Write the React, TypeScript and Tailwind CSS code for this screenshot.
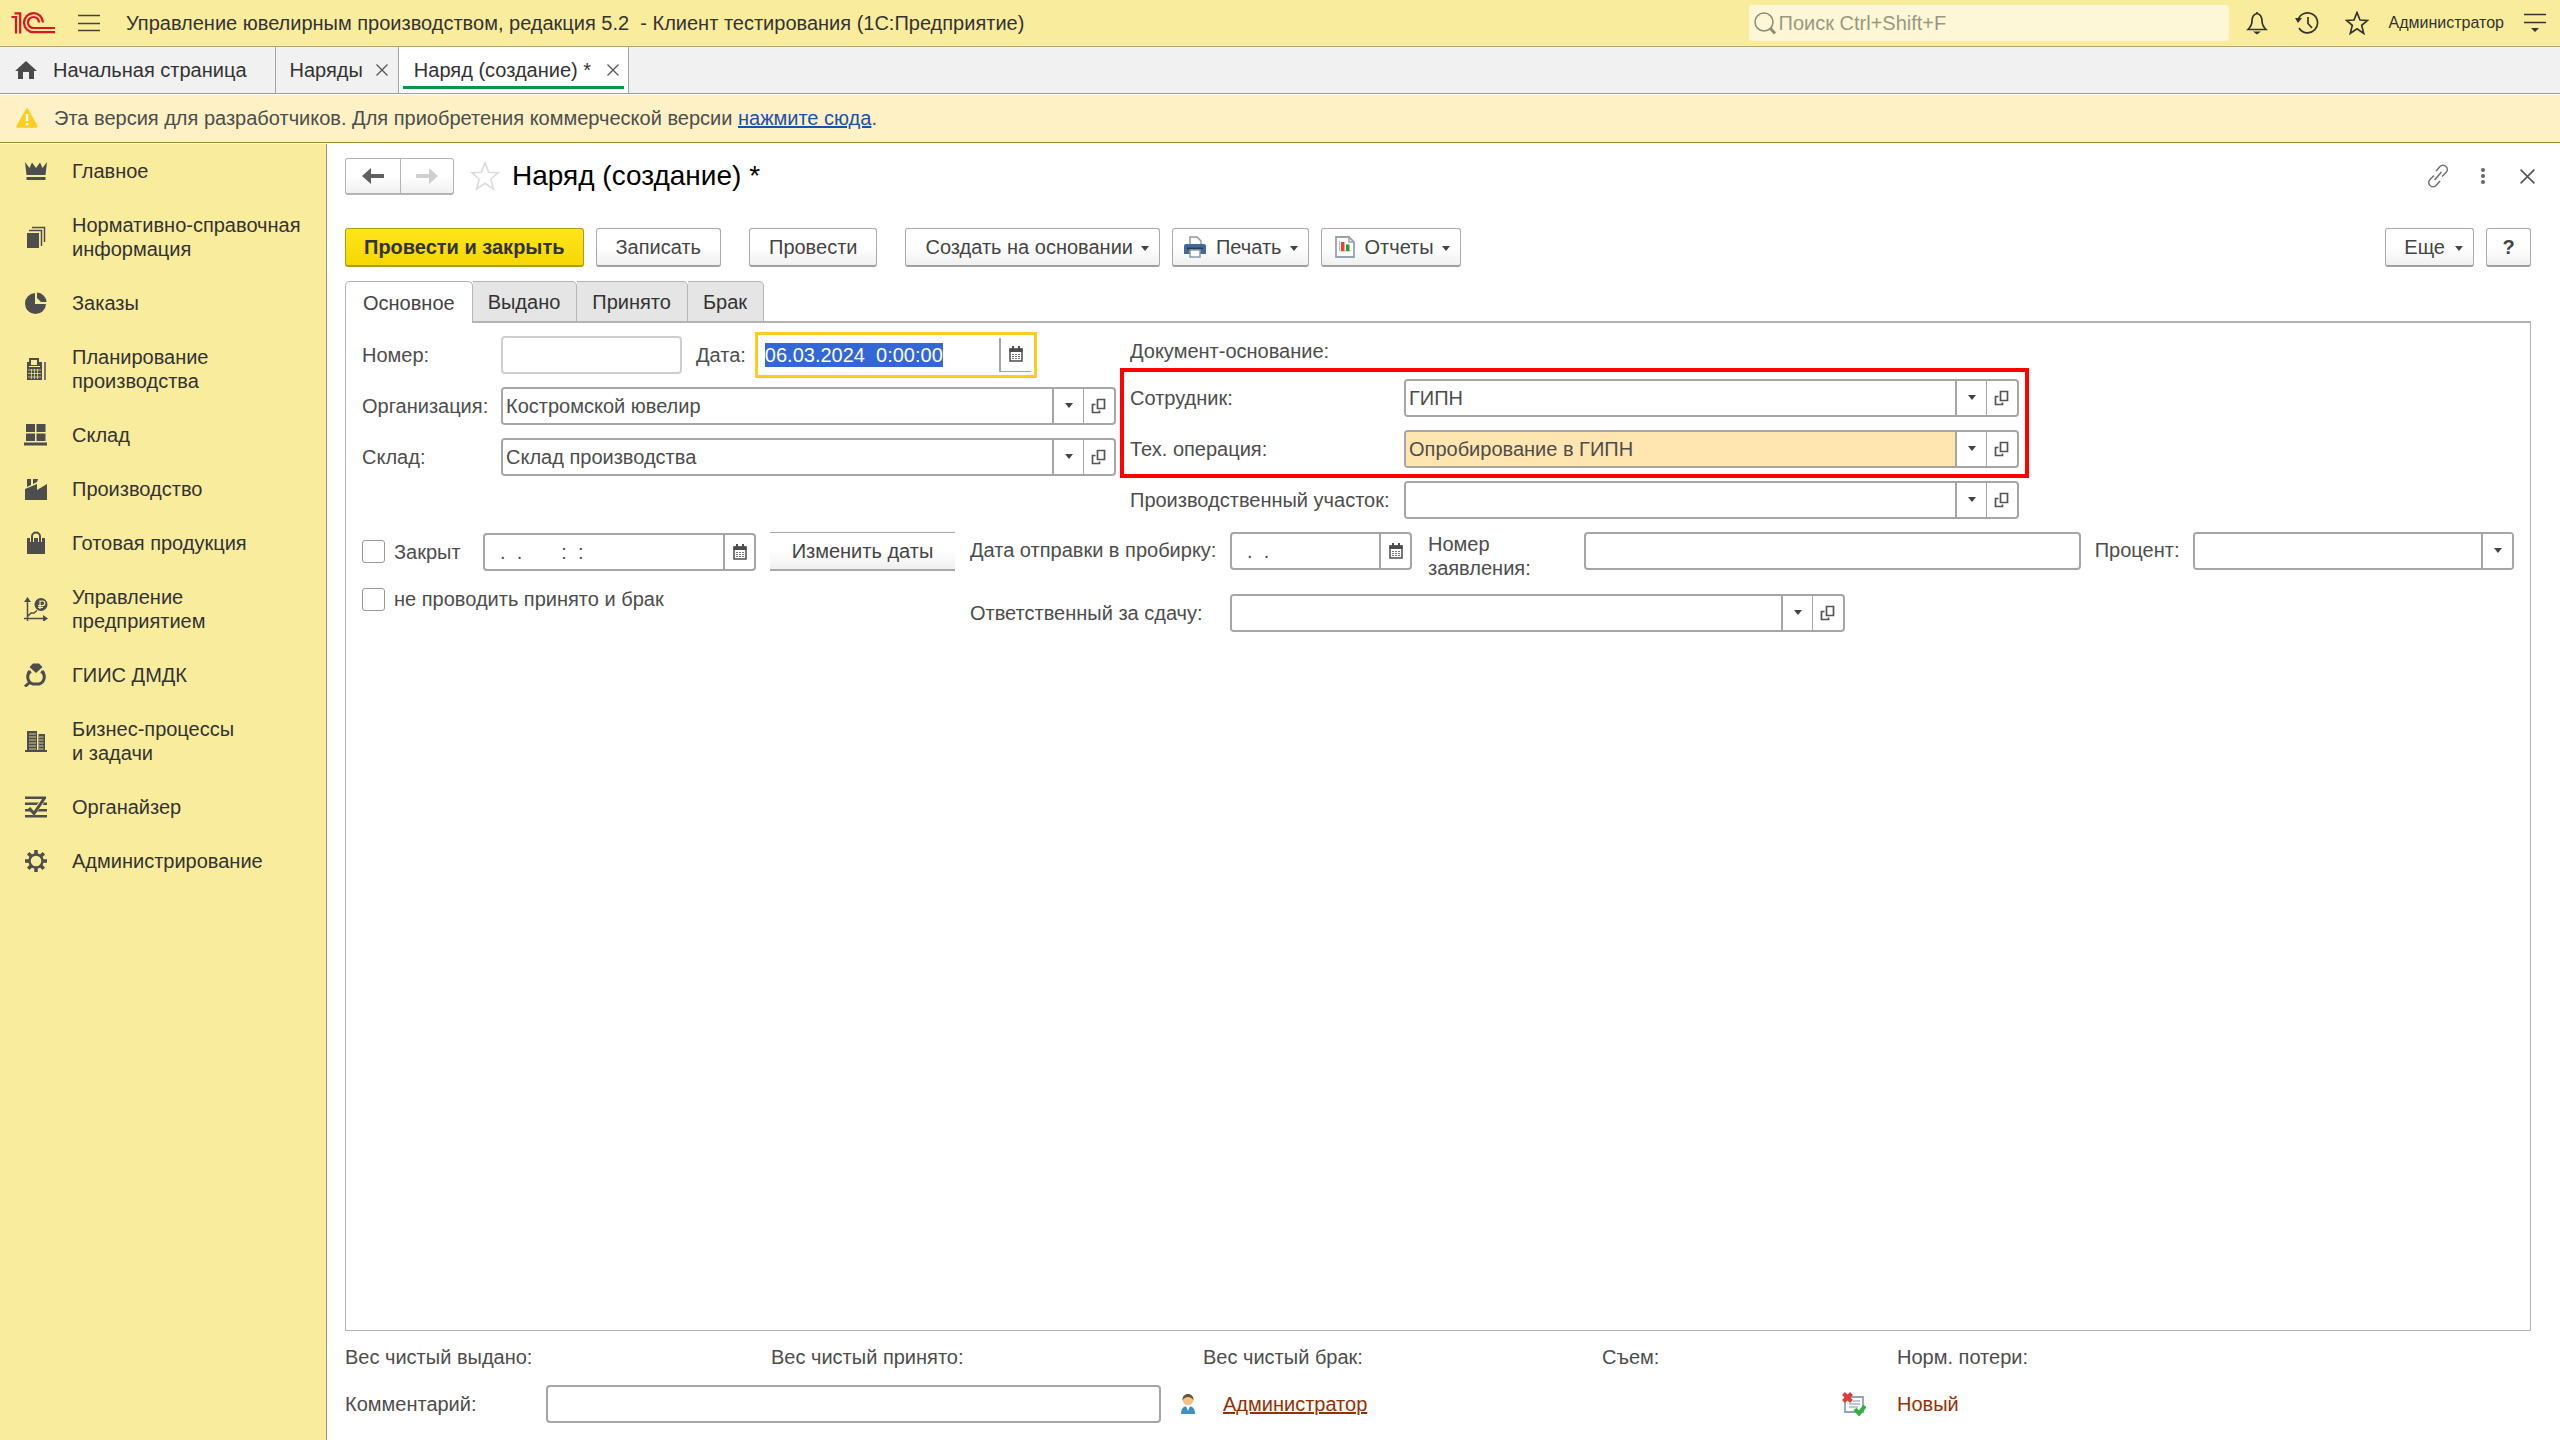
import React, { useEffect, useRef } from 'react';

type IconProps = { children: React.ReactNode; className?: string };

const Icon = ({ children, className = 'h-6 w-6' }: IconProps) => (
  <svg viewBox="0 0 24 24" fill="none" stroke="none" className={`shrink-0 ${className}`} aria-hidden="true">
    {children}
  </svg>
);

const icons = {
  crown: (
    <g fill="#4d4d4d">
      <path d="M1 3l4.500 6L8 3.500l4 5.500 4-5.500 2.500 5.500L23 3l-1.500 13h-19z" />
      <path d="M2.500 18h19v3h-19z" />
    </g>
  ),
  pages: (
    <g>
      <path fill="#4d4d4d" d="M3 8h12v15H3z" />
      <path stroke="#4d4d4d" strokeWidth="1.5" d="M5 5.500h12.500V21M8 2.500h12.500V17" />
    </g>
  ),
  pie: (
    <g fill="#4d4d4d">
      <path d="M11 2v11h11a10.500 10.500 0 1 1-11-11z" />
      <path d="M13 1.500A10 10 0 0 1 22.500 11H17l-4-4z" />
    </g>
  ),
  register: (
    <g>
      <path fill="#4d4d4d" d="M5 1h10v4h3v18H3V5h2z" />
      <path fill="#faec9d" d="M7 3h6v5H7zM5 9h11v1H5z" />
      <path stroke="#faec9d" strokeWidth=".7" d="M4 13h13M4 16.500h13M4 20h13M7.500 12v10M10.500 12v10M13.500 12v10" />
      <path stroke="#4d4d4d" strokeWidth="1.500" d="M21 5v18" />
    </g>
  ),
  boxes: (
    <path fill="#4d4d4d" d="M2 1h9v8H2zM12.500 1h9v8h-9zM2 10.500h9v7.500H2zM12.500 10.500h9v7.500h-9zM0 19.500h23v3H0z" />
  ),
  factory: (
    <path fill="#4d4d4d" d="M1 23V12l12-5v6l10-6v16zM3 2h4v6l-4 2zM9 2h5l-1 3-4 2z" />
  ),
  bag: (
    <g>
      <path fill="#4d4d4d" d="M3 7h18v16H3z" />
      <path stroke="#faec9d" strokeWidth="4" d="M8 11V6a4 4 0 0 1 8 0v5" />
      <path stroke="#4d4d4d" strokeWidth="2" d="M8 11V5.500a4 4 0 0 1 8 0V11" />
    </g>
  ),
  growth: (
    <g>
      <path stroke="#4d4d4d" strokeWidth="1.500" d="M3.500 24V3M0 21.500h21M4 19l3-3h3l3-2.500" />
      <path fill="#4d4d4d" d="M3.500 0L7 5H0zM24 21.500L19 18v7z" />
      <circle cx="17" cy="7.500" r="6.500" fill="#4d4d4d" />
      <path stroke="#faec9d" strokeWidth="1.200" d="M16 12V4h2.500a2.300 2.300 0 0 1 0 4.600H14M14 10.500h5" />
    </g>
  ),
  gem: (
    <g>
      <path fill="#4d4d4d" d="M9 .5h6l3.500 3.500L12 10 5.500 4z" />
      <path
        stroke="#4d4d4d"
        strokeWidth="3"
        d="M7 8.500C1.500 11 3.500 20 9 21h6c5.500-1 7.500-10 2-12.500M6.500 18.500L1 23.500M3.500 8.500L6.500 10M20.500 8.500L17.500 10"
      />
    </g>
  ),
  office: (
    <g>
      <path fill="#4d4d4d" d="M3 2h10v20H3zM14.500 5H21v17h-6.500zM1 21h22v2H1z" />
      <path stroke="#faec9d" strokeWidth=".8" d="M5 5h7M5 8h7M5 11h7M5 14h7M5 17h7M5 20h7M15 8h4.500M15 11h4.500M15 14h4.500M15 17h4.500M15 20h4.500" />
    </g>
  ),
  planner: (
    <g>
      <path fill="#4d4d4d" d="M1 1.500h21V4H1zM1 7.500h22V10H1zM1 14h22v2.500H1zM1 20h22v2.500H1z" />
      <path stroke="#faec9d" strokeWidth="4.500" d="M7 13l3 4 8-10" />
      <path stroke="#4d4d4d" strokeWidth="3" d="M5 13l5 5.500L20.500 3" />
    </g>
  ),
  gear: (
    <g stroke="#4d4d4d">
      <circle cx="12" cy="12" r="6.500" strokeWidth="2.400" />
      <path strokeWidth="3.500" d="M12 1v4M12 19v4M1 12h4M19 12h4M4.200 4.200L7 7M17 17l2.800 2.800M19.800 4.200L17 7M7 17l-2.800 2.800" />
    </g>
  ),
};

const sections: { label: string; icon: keyof typeof icons }[] = [
  { label: 'Главное', icon: 'crown' },
  { label: 'Нормативно-справочная информация', icon: 'pages' },
  { label: 'Заказы', icon: 'pie' },
  { label: 'Планирование производства', icon: 'register' },
  { label: 'Склад', icon: 'boxes' },
  { label: 'Производство', icon: 'factory' },
  { label: 'Готовая продукция', icon: 'bag' },
  { label: 'Управление предприятием', icon: 'growth' },
  { label: 'ГИИС ДМДК', icon: 'gem' },
  { label: 'Бизнес-процессы и\u00a0задачи', icon: 'office' },
  { label: 'Органайзер', icon: 'planner' },
  { label: 'Администрирование', icon: 'gear' },
];

const starPath = 'M12 1.500l3 7.500 7.500.4-5.800 5 2 8-6.700-4.600-6.700 4.600 2-8-5.800-5L9 9z';

const Arrow = () => (
  <svg viewBox="0 0 8 6" className="mt-1 h-1.5 w-2 shrink-0" aria-hidden="true">
    <path d="M0 0h8L4 5z" fill="#444" />
  </svg>
);

const Cross = ({ className = 'h-3 w-3' }: { className?: string }) => (
  <svg viewBox="0 0 12 12" className={className} aria-hidden="true">
    <path d="M.5.5l11 11M11.500.5l-11 11" stroke="#555" strokeWidth="1.300" />
  </svg>
);

const CalendarIcon = () => (
  <svg viewBox="0 0 14 16" className="h-4 w-3.5" aria-hidden="true">
    <path d="M1 3h12v12H1z" fill="#fff" stroke="#4d4d4d" strokeWidth="1.500" />
    <path d="M.5 2.500h13V6H.5zM3 0h2v3H3zM9 0h2v3H9z" fill="#4d4d4d" />
    <path d="M3 8.500h8M3 10.500h8M3 12.500h8" stroke="#777" strokeDasharray="2 1" />
  </svg>
);

const OpenIcon = () => (
  <svg viewBox="0 0 16 16" className="h-4 w-4" fill="none" stroke="#555" strokeWidth="1.700" aria-hidden="true">
    <path d="M6.500 1.500h7v9h-7zM4.500 6.500h-3v8h7v-2" />
  </svg>
);

const buttonBase =
  'flex h-[39px] items-center rounded-[3px] border border-[#a9a9a9] border-b-2 border-b-[#a0a0a0] bg-linear-to-b from-white from-50% to-[#f0f0f0] whitespace-nowrap text-[#444]';

const fieldBase = 'h-[38px] rounded-[4px] border-2 border-[#a6a6a6] bg-white';

type ComboProps = {
  id: string;
  value?: string;
  open?: boolean;
  highlighted?: boolean;
  className?: string;
};

const Combo = ({ id, value = '', open = true, highlighted = false, className = '' }: ComboProps) => (
  <div className={`${fieldBase} flex overflow-hidden ${className}`}>
    <div className="grid min-w-0 flex-1 grid-cols-[1fr_31px]">
      <select
        id={id}
        defaultValue={value}
        className={`col-span-2 col-start-1 row-start-1 min-w-0 appearance-none pl-[3px] outline-none ${highlighted ? 'bg-[#ffe6b0]' : 'bg-white'}`}
      >
        <option>{value}</option>
      </select>
      <span className="pointer-events-none col-start-2 row-start-1 flex items-center justify-center border-l-2 border-[#a6a6a6] bg-white pb-1">
        <Arrow />
      </span>
    </div>
    {open && (
      <button aria-label="Открыть" className="flex w-[31px] items-center justify-center border-l border-[#a6a6a6]">
        <OpenIcon />
      </button>
    )}
  </div>
);

const DateField = ({ id, value, className = '' }: { id: string; value: string; className?: string }) => (
  <div className={`${fieldBase} flex ${className}`}>
    <input id={id} defaultValue={value} className="min-w-0 flex-1 pl-1 outline-none" />
    <button aria-label="Выбрать дату" className="flex w-[31px] items-center justify-center border-l-2 border-[#a6a6a6]">
      <CalendarIcon />
    </button>
  </div>
);

const TopBar = () => (
  <header className="flex h-[47px] items-center border-b border-[#b0a66e] bg-[#faec9d] pr-3.5 text-[#333]">
    <svg viewBox="0 0 44 22" className="ml-[11px] h-[22px] w-11 shrink-0" fill="none" stroke="#e0141e" strokeWidth="2.200" aria-label="1С">
      <path d="M.5 5H5v16.500M3.500 1.300h5.700v20.200" />
      <path d="M32 10.500a9.500 9.500 0 1 0-9.500 9.700H44" />
      <path d="M28 10.500a5.500 5.500 0 1 0-5.500 5.500H44" />
    </svg>
    <button aria-label="Меню" className="ml-[23px]">
      <svg viewBox="0 0 22 18" className="h-[18px] w-[22px]" stroke="#444" strokeWidth="1.500" aria-hidden="true">
        <path d="M0 1.500h22M0 9.500h22M0 16.500h22" />
      </svg>
    </button>
    <span className="ml-[26px] whitespace-pre">Управление ювелирным производством, редакция 5.2  - Клиент тестирования (1С:Предприятие)</span>
    <label className="ml-auto flex h-9 w-[480px] items-center gap-1 rounded-[4px] bg-[#fdf7d8] pl-1">
      <svg viewBox="0 0 24 24" className="h-6 w-6 shrink-0" fill="none" stroke="#8f8c76" aria-label="Поиск">
        <circle cx="11" cy="11" r="9" strokeWidth="1.500" />
        <path d="M17 17l5 5.500" strokeWidth="3" />
      </svg>
      <input type="search" placeholder="Поиск Ctrl+Shift+F" className="-ml-0.5 min-w-0 flex-1 outline-none placeholder:text-[#9a977f]" />
    </label>
    <button aria-label="Уведомления" className="ml-4">
      <Icon>
        <path d="M12 2.500c-4 1-5 4-5 7.500 0 4-1.500 6-4 8.500h18c-2.500-2.500-4-4.500-4-8.500 0-3.500-1-6.500-5-7.500zM12 1v2" stroke="#333" strokeWidth="1.700" />
        <path d="M8 20.500h8l-4 3z" fill="#333" />
      </Icon>
    </button>
    <button aria-label="История" className="ml-[26px]">
      <Icon>
        <path d="M3 9a10 10 0 1 1 1 8M13 6v6.500l4 4.500" stroke="#333" strokeWidth="1.700" />
        <path d="M0 7l7 0-4 5z" fill="#333" />
      </Icon>
    </button>
    <button aria-label="Избранное" className="ml-[26px]">
      <Icon>
        <path d={starPath} stroke="#333" strokeWidth="1.700" />
      </Icon>
    </button>
    <button className="ml-5 text-base">Администратор</button>
    <button aria-label="Настройки" className="ml-5">
      <svg viewBox="0 0 22 20" className="h-5 w-[22px]" stroke="#333" strokeWidth="1.500" aria-hidden="true">
        <path d="M0 1.500h22M0 9.500h22" />
        <path d="M7 15h8l-4 4z" fill="#333" stroke="none" />
      </svg>
    </button>
  </header>
);

const WindowTabs = () => (
  <nav className="flex h-[47px] border-b border-[#9c9c9c] bg-[#f1f1f1] text-[#333]">
    <a href="#home" className="flex items-center gap-4 border-r border-[#a6a6a6] pr-7 pl-[15px]">
      <svg viewBox="0 0 22 18" className="h-[18px] w-[22px]" aria-hidden="true">
        <path d="M11 0l11 10h-3v8h-5v-7H8v7H3v-8H0z" fill="#4a4a4a" />
      </svg>
      Начальная страница
    </a>
    <div className="flex items-center gap-[13px] border-r border-[#a6a6a6] pr-[10px] pl-[14px]">
      <a href="#orders">Наряды</a>
      <button aria-label="Закрыть Наряды">
        <Cross />
      </button>
    </div>
    <div className="flex border-r border-[#a6a6a6] bg-white px-1 pb-1">
      <div className="flex items-center gap-4 border-b-3 border-[#0a9648] pt-1.5 pr-[5px] pl-[11px]">
        <a href="#order">Наряд (создание) *</a>
        <button aria-label="Закрыть Наряд (создание)">
          <Cross />
        </button>
      </div>
    </div>
  </nav>
);

const DevBanner = () => (
  <div className="mt-px mb-px flex h-12 items-center gap-4 border-b border-[#a08a28] bg-[#fdf1c5] pb-0.5 pl-4 text-[#4d4d4d]">
    <svg viewBox="0 0 22 20" className="h-5 w-[22px]" aria-hidden="true">
      <path d="M11 1.500L20.500 18.500h-19z" fill="#fdcd20" stroke="#fdcd20" strokeWidth="2.500" strokeLinejoin="round" />
      <path d="M11 6v7M11 15v2.500" stroke="#fff" strokeWidth="2.500" />
    </svg>
    <p>
      Эта версия для разработчиков. Для приобретения коммерческой версии{' '}
      <a href="#buy" className="text-[#1a4fb4] underline decoration-2">нажмите сюда</a>.
    </p>
  </div>
);

const Sidebar = () => (
  <aside className="w-[327px] shrink-0 border-r border-[#a59c66] bg-[#faec9d] text-[#333]">
    {sections.map((section) => (
      <a key={section.label} href="#section" className="flex items-center gap-6 py-[15px] pr-[74px] pl-6">
        <Icon>{icons[section.icon]}</Icon>
        <span className={section.icon === 'pages' || section.icon === 'bag' ? '-mr-14' : ''}>{section.label}</span>
      </a>
    ))}
  </aside>
);

const FormHeader = () => (
  <div className="flex h-9 items-center">
    <div className="flex h-[37px] rounded-[3px] border border-b-2 border-[#b4b4b4] bg-linear-to-b from-white from-50% to-[#f0f0f0]">
      <button aria-label="Назад" className="flex w-[55px] items-center justify-center border-r border-[#b4b4b4]">
        <svg viewBox="0 0 22 16" className="h-4 w-[22px]" aria-hidden="true">
          <path d="M0 8l9-8v6h13v4H9v6z" fill="#5f5f5f" />
        </svg>
      </button>
      <button aria-label="Вперед" className="flex w-[52px] items-center justify-center">
        <svg viewBox="0 0 22 16" className="h-4 w-[22px]" aria-hidden="true">
          <path d="M22 8l-9-8v6H0v4h13v6z" fill="#d0d0d0" />
        </svg>
      </button>
    </div>
    <button aria-label="В избранное" className="ml-4">
      <Icon className="h-[30px] w-[30px]">
        <path d={starPath} stroke="#dcdcdc" strokeWidth="1.300" />
      </Icon>
    </button>
    <h1 className="ml-3 text-[28px] text-black">Наряд (создание) *</h1>
    <div className="-mr-1 ml-auto flex items-center">
      <button aria-label="Ссылка">
        <Icon>
          <path
            d="M10 7l4-4.500c2-2 4.500-1.500 6 0s2 4 0 6l-4 4M14 17l-4 4.500c-2 2-4.500 1.500-6 0s-2-4 0-6l4-4M8.500 16l7-8"
            stroke="#707070"
            strokeWidth="1.500"
          />
        </Icon>
      </button>
      <button aria-label="Еще действия" className="ml-[30px]">
        <svg viewBox="0 0 6 18" className="h-[18px] w-1.5" fill="#666" aria-hidden="true">
          <circle cx="3" cy="3" r="2" />
          <circle cx="3" cy="9" r="2" />
          <circle cx="3" cy="15" r="2" />
        </svg>
      </button>
      <button aria-label="Закрыть" className="ml-[34px]">
        <Cross className="h-[15px] w-[15px]" />
      </button>
    </div>
  </div>
);

const Toolbar = () => (
  <div className="mt-[34px] flex items-center">
    <button className="flex h-[39px] items-center rounded-[3px] border border-b-2 border-[#b09a10] bg-linear-to-b from-[#ffe51a] to-[#f5d800] px-[18px] font-bold whitespace-nowrap text-[#333]">
      Провести и закрыть
    </button>
    <button className={`${buttonBase} ml-3 px-[19px]`}>Записать</button>
    <button className={`${buttonBase} ml-7 px-[19px]`}>Провести</button>
    <button className={`${buttonBase} ml-7 gap-2 pr-[10px] pl-[19px]`}>
      Создать на основании
      <Arrow />
    </button>
    <button className={`${buttonBase} ml-3 gap-2 pr-[10px] pl-[11px]`}>
      <svg viewBox="0 0 22 22" className="mr-0.5 h-[22px] w-[22px]" aria-hidden="true">
        <path d="M6 1h7l4 4v5H6z" fill="#fff" stroke="#8d99a8" strokeWidth="1.500" />
        <path d="M2 8h18a2 2 0 0 1 2 2v8H0v-8a2 2 0 0 1 2-2z" fill="#426c96" />
        <path d="M3 12.500h16" stroke="#1f3f60" strokeWidth="2" />
        <path d="M6 14h10v7H6z" fill="#fff" stroke="#8d99a8" strokeWidth="1.500" />
      </svg>
      Печать
      <Arrow />
    </button>
    <button className={`${buttonBase} ml-3 gap-2 pr-[10px] pl-[13px]`}>
      <svg viewBox="0 0 20 22" className="mr-0.5 h-[22px] w-5" aria-hidden="true">
        <path d="M1 1h13l5 5v15H1z" fill="#fff" stroke="#98a3ae" strokeWidth="1.800" />
        <path d="M14 1v5h5" fill="none" stroke="#98a3ae" strokeWidth="1.500" />
        <path d="M4.500 5v10h11" fill="none" stroke="#b5bcc4" />
        <path d="M6 6h3.500v9H6z" fill="#f0402c" />
        <path d="M11 8.500h3.500V15H11z" fill="#2f9a35" />
      </svg>
      Отчеты
      <Arrow />
    </button>
    <button className={`${buttonBase} ml-auto gap-2.5 pr-[10px] pl-[18px]`}>
      Еще
      <Arrow />
    </button>
    <button className={`${buttonBase} ml-3 w-[45px] justify-center font-bold`}>?</button>
  </div>
);

const FormTabs = () => (
  <div className="relative z-10 mt-3.5 -mb-0.5 flex h-[42px]">
    <button className="rounded-t-[5px] border border-b-0 border-[#b4b4b4] bg-white px-[17px] text-[#444]">Основное</button>
    {['Выдано', 'Принято', 'Брак'].map((tab) => (
      <button
        key={tab}
        className="rounded-tr-[5px] border border-b-2 border-l-0 border-[#b4b4b4] bg-[#e5e5e5] pr-4 pl-[15px] text-[#333]"
      >
        {tab}
      </button>
    ))}
  </div>
);

const row = 'flex h-[51px] items-center';

const MainTab = () => {
  const dateRef = useRef<HTMLInputElement>(null);

  useEffect(() => {
    dateRef.current?.focus();
    dateRef.current?.select();
  }, []);

  return (
    <section className="flex-1 border border-t-2 border-[#b4b4b4] px-4 pt-1.5">
      <div className="flex items-start gap-3.5">
        <div>
          <div className={row}>
            <label htmlFor="number" className="w-[139px]">Номер:</label>
            <input id="number" className="h-[38px] w-[181px] rounded-[4px] border-2 border-[#cfcfcf] px-1 outline-none" />
            <label htmlFor="date" className="mr-[9px] ml-3.5">Дата:</label>
            <div className="flex h-[46px] w-[282px] border-3 border-[#fdcd20] p-[3px]">
              <input
                id="date"
                ref={dateRef}
                defaultValue="06.03.2024  0:00:00"
                className="min-w-0 flex-1 pl-1 outline-none selection:bg-[#3366d6] selection:text-white"
              />
              <button aria-label="Выбрать дату" className="flex w-8 items-center justify-center border-b border-l-2 border-[#a6a6a6]">
                <CalendarIcon />
              </button>
            </div>
          </div>
          <div className={row}>
            <label htmlFor="org" className="w-[139px]">Организация:</label>
            <Combo id="org" value="Костромской ювелир" className="w-[615px]" />
          </div>
          <div className={row}>
            <label htmlFor="store" className="w-[139px]">Склад:</label>
            <Combo id="store" value="Склад производства" className="w-[615px]" />
          </div>
        </div>
        <div>
          <div className="flex h-[43px] items-center">Документ-основание:</div>
          <div className="relative">
            <div className={row}>
              <label htmlFor="worker" className="w-[274px]">Сотрудник:</label>
              <Combo id="worker" value="ГИПН" className="w-[615px]" />
            </div>
            <div className={row}>
              <label htmlFor="operation" className="w-[274px]">Тех. операция:</label>
              <Combo id="operation" value="Опробирование в ГИПН" highlighted className="w-[615px]" />
            </div>
            <div className="pointer-events-none absolute -inset-x-2.5 -inset-y-1 border-4 border-[#fe0000]" />
          </div>
          <div className={row}>
            <label htmlFor="area" className="w-[274px]">Производственный участок:</label>
            <Combo id="area" className="w-[615px]" />
          </div>
        </div>
      </div>

      <div className="mt-[7px] flex items-start gap-[15px]">
        <div className="w-[593px] shrink-0">
          <div className="flex h-[39px] items-center">
            <label className="flex items-center gap-[9px]">
              <input type="checkbox" className="h-[23px] w-[23px] appearance-none rounded-[3px] border border-[#999] bg-white" />
              Закрыт
            </label>
            <DateField id="closed" value="  .  .       :  :" className="ml-auto w-[273px]" />
            <button className="ml-3.5 h-[39px] w-[185px] border-t border-b-2 border-[#a9a9a9] bg-linear-to-b from-white from-50% to-[#f0f0f0] text-[#444]">
              Изменить даты
            </button>
          </div>
          <label className="mt-4 flex items-center gap-[9px]">
            <input type="checkbox" className="h-[23px] w-[23px] appearance-none rounded-[3px] border border-[#999] bg-white" />
            не проводить принято и брак
          </label>
        </div>
        <div className="min-w-0 flex-1">
          <div className="flex h-12 items-start">
            <label htmlFor="assay" className="w-[260px] shrink-0 pt-1.5">Дата отправки в пробирку:</label>
            <DateField id="assay" value="  .  ." className="w-[182px] shrink-0" />
            <label htmlFor="claim" className="ml-4 w-[156px] shrink-0 pr-10">Номер заявления:</label>
            <input id="claim" className={`${fieldBase} w-0 grow-[49] px-1 outline-none`} />
            <label htmlFor="percent" className="mr-3.5 ml-3.5 pt-1.5">Процент:</label>
            <Combo id="percent" open={false} className="w-0 grow-[32]" />
          </div>
          <div className="mt-3.5 flex items-center">
            <label htmlFor="responsible" className="w-[260px]">Ответственный за сдачу:</label>
            <Combo id="responsible" className="w-[615px]" />
          </div>
        </div>
      </div>
    </section>
  );
};

const FormFooter = () => (
  <footer className="grid grid-cols-[426px_432px_399px_295px_1fr] pt-3.5 pb-[17px]">
    <span>Вес чистый выдано:</span>
    <span>Вес чистый принято:</span>
    <span>Вес чистый брак:</span>
    <span>Съем:</span>
    <span>Норм. потери:</span>
    <div className="col-span-2 mt-4 flex items-center">
      <label htmlFor="comment" className="w-[201px]">Комментарий:</label>
      <input id="comment" className={`${fieldBase} w-[615px] px-1 outline-none`} />
      <svg viewBox="0 0 14 20" className="ml-5 h-5 w-3.5" aria-hidden="true">
        <path d="M0 20c0-5 2-8 7-8s7 3 7 8z" fill="#3d8fc4" />
        <circle cx="7" cy="6.500" r="5" fill="#f2c184" />
        <path d="M1.500 7C1 2 4 0 7 0s6 2 5.500 7c-1-3-3-4-5.500-4S2.500 4 1.500 7z" fill="#6a5335" />
        <path d="M5 12h4l-2 5z" fill="#fff" />
      </svg>
    </div>
    <div className="mt-4 flex items-center pl-5">
      <a href="#author" className="text-[#963000] underline decoration-2">Администратор</a>
    </div>
    <div className="mt-4 flex items-center justify-end pr-[31px]">
      <svg viewBox="0 0 24 24" className="h-6 w-6" aria-hidden="true">
        <path d="M3 5h18v15H3z" fill="#fff" stroke="#8fa3bd" strokeWidth="1.800" />
        <path d="M11 9h7M7 12h11M7 15h9" stroke="#a9b6c6" strokeWidth="1.300" />
        <path d="M1.500 1.500l8 8M9.500 1.500l-8 8" stroke="#de3b36" strokeWidth="4" />
        <path d="M13 17l4 4.500 6-7.500" fill="none" stroke="#2eb23a" strokeWidth="4" />
      </svg>
    </div>
    <span className="mt-4 flex items-center text-[#963000]">Новый</span>
  </footer>
);

const App = () => {
  return (
    <div className="flex min-h-screen flex-col bg-white font-['Liberation_Sans',Arial,sans-serif] text-xl leading-6 text-[#4d4d4d]">
      <TopBar />
      <WindowTabs />
      <DevBanner />
      <div className="flex flex-1">
        <Sidebar />
        <main className="flex min-w-0 flex-1 flex-col pt-3.5 pr-[29px] pl-[18px]">
          <FormHeader />
          <Toolbar />
          <FormTabs />
          <MainTab />
          <FormFooter />
        </main>
      </div>
    </div>
  );
};

export default App;
